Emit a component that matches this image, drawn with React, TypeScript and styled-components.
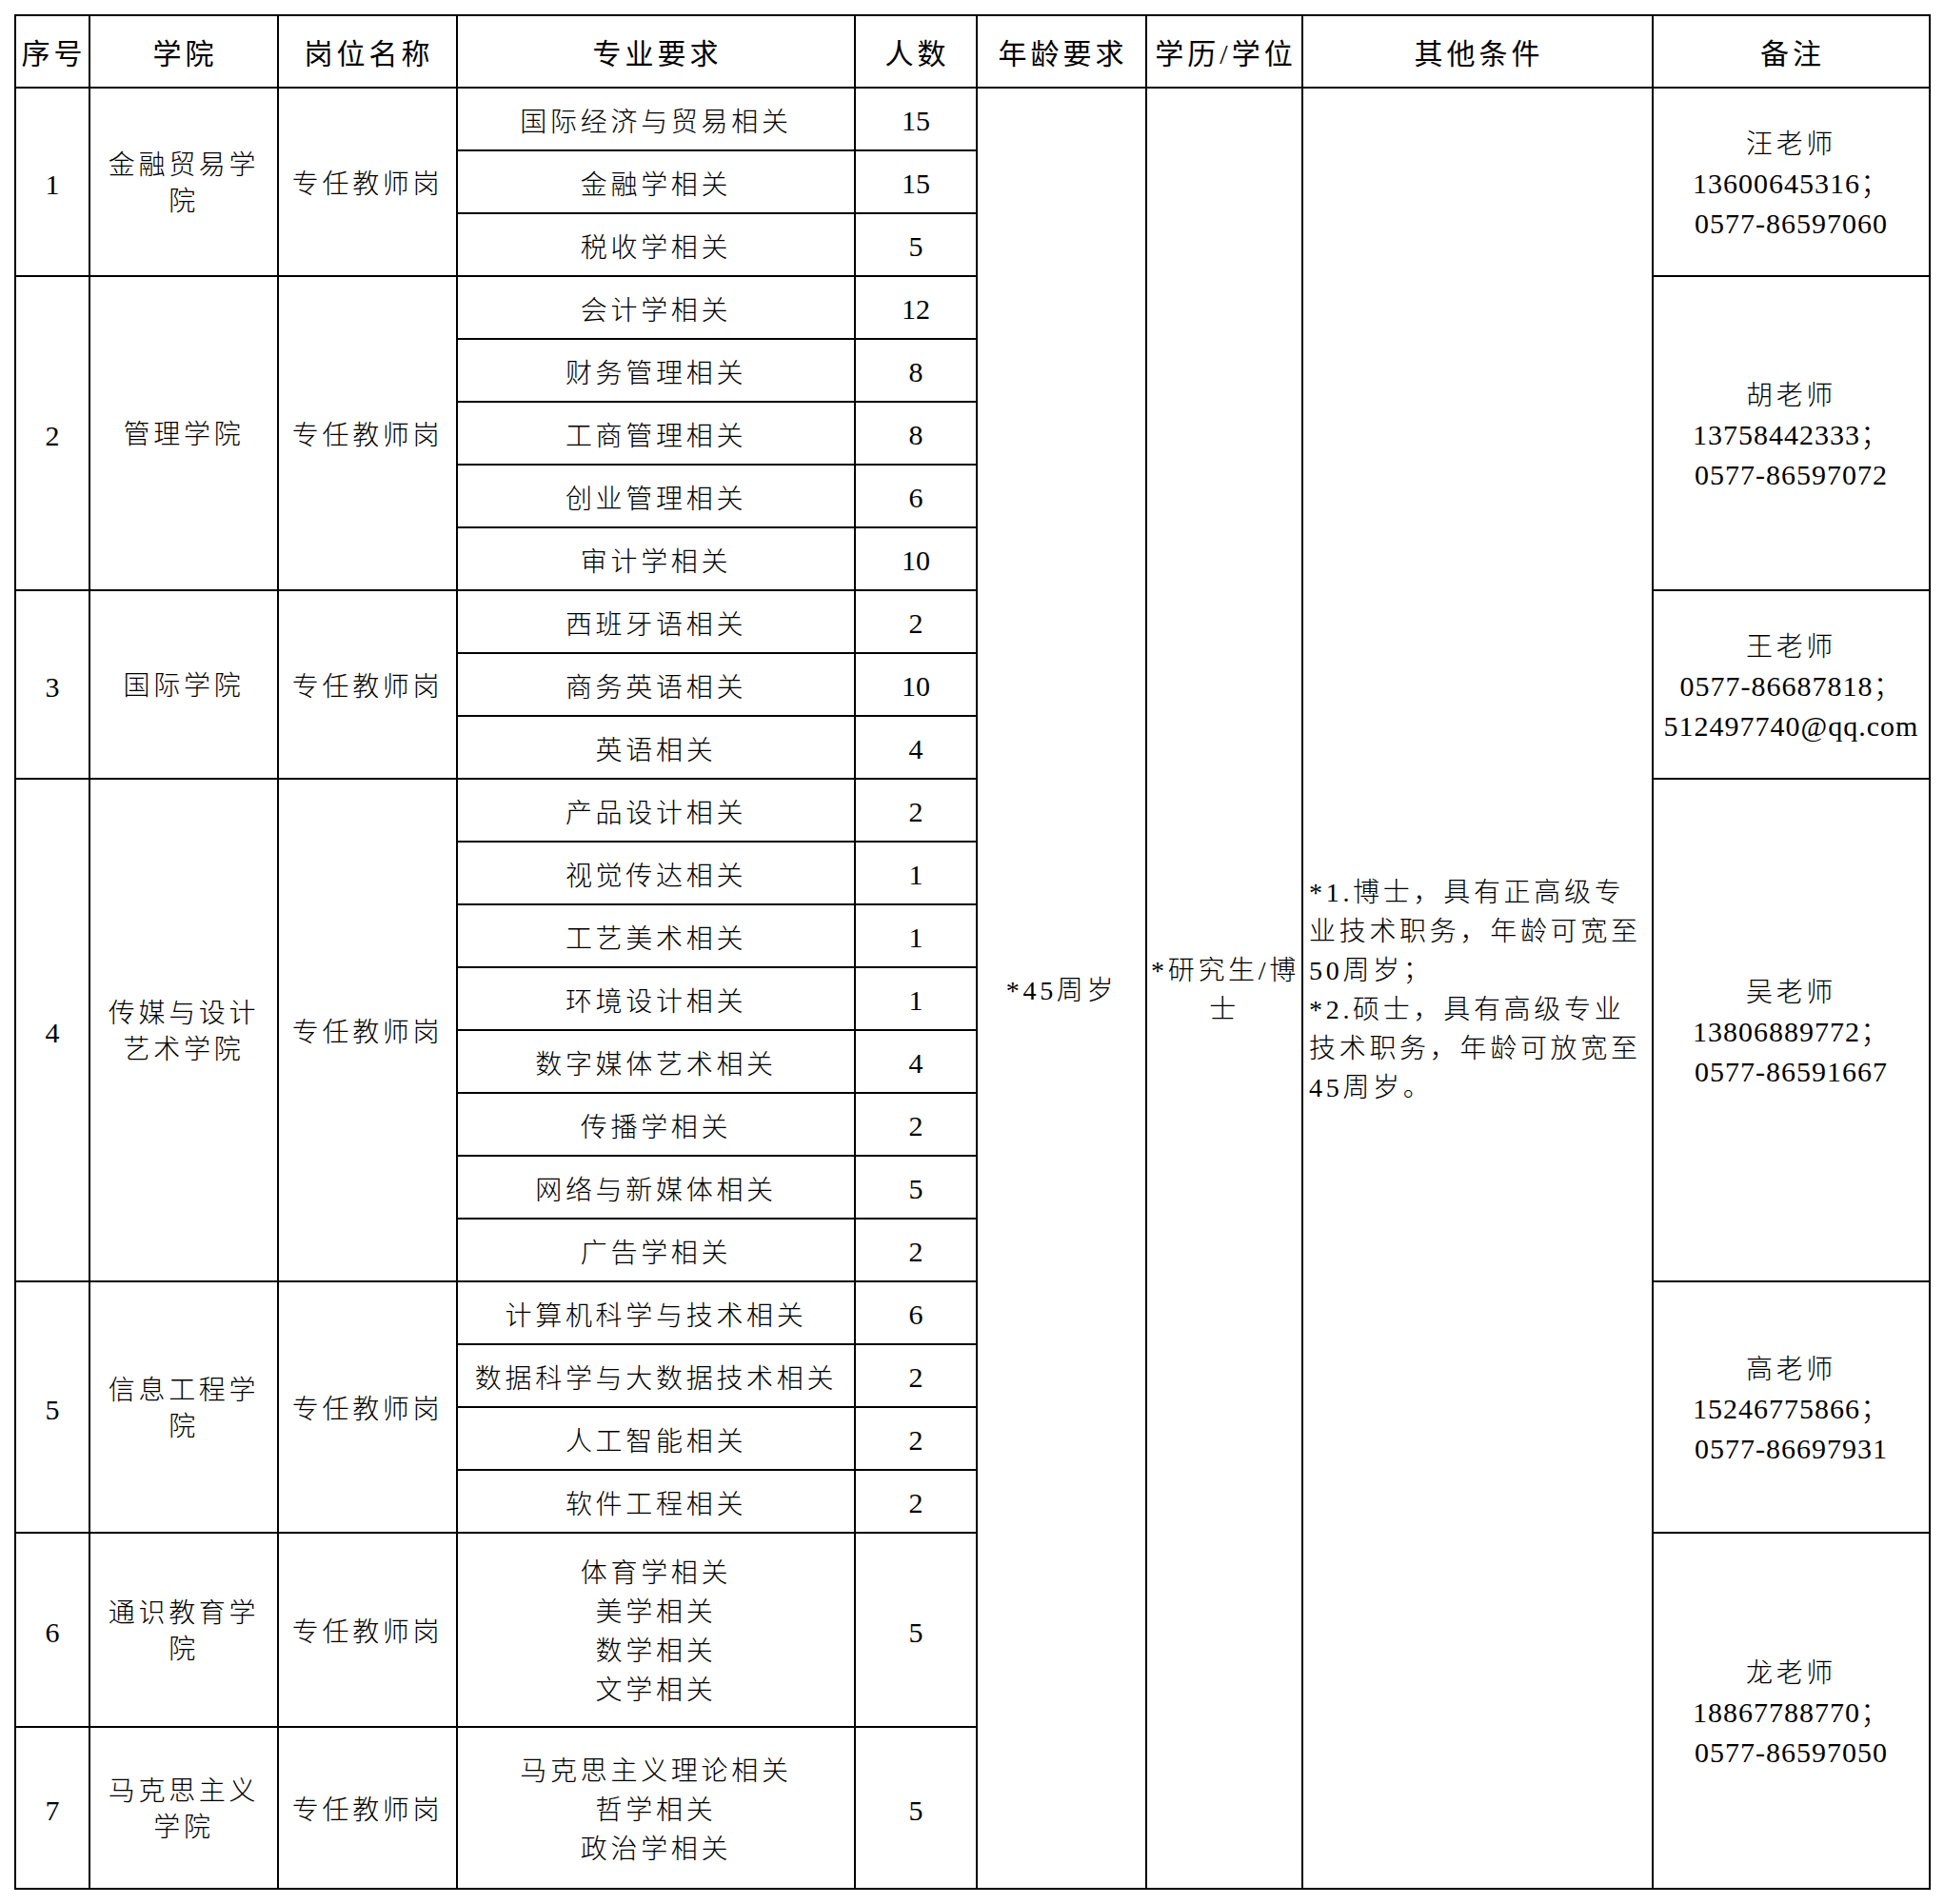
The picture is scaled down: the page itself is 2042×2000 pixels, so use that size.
import { Fragment } from 'react';
import styled, { createGlobalStyle } from 'styled-components';

const GlobalStyle = createGlobalStyle`
  html, body {
    margin: 0;
    padding: 0;
    background: #fff;
  }
`;

const Page = styled.div`
  padding: 15px 0 0 15px;
`;

const Sheet = styled.table`
  border-collapse: collapse;
  table-layout: fixed;
  width: 2011px;
  font-family: 'Liberation Serif', 'Noto Sans CJK SC', serif;
  font-size: 28px;
  font-weight: 300;
  color: #000;
`;

const HeadRow = styled.tr`
  height: 76px;
`;

const HeadCell = styled.th`
  border: 2px solid #000;
  padding: 0 0 0 3px;
  font-size: 30px;
  font-weight: 400;
  letter-spacing: 4px;
  text-align: center;
  vertical-align: middle;
  white-space: nowrap;
`;

const Row = styled.tr<{ $h: number }>`
  height: ${(p) => p.$h}px;
`;

const Cell = styled.td<{ $align?: 'left' | 'center'; $top?: number; $numeric?: boolean }>`
  border: 2px solid #000;
  padding: ${(p) => p.$top ?? 4}px 4px 0 ${(p) => (p.$align === 'left' ? 6 : 4)}px;
  text-align: ${(p) => p.$align ?? 'center'};
  vertical-align: middle;
  font-size: ${(p) => (p.$numeric ? 30 : 28)}px;
  line-height: 41px;
  letter-spacing: ${(p) => (p.$numeric ? 0 : 3.7)}px;
  white-space: nowrap;
`;

const CollegeText = styled.div`
  line-height: 38px;
`;

const Contact = styled.span`
  font-size: 30px;
  letter-spacing: 1px;
`;

type Major = { lines: string[]; count: number };

type Group = {
  no: number;
  college: string[];
  majors: Major[];
  rowHeight: number;
  contact?: { name: string; phone: string; extra: string; span: number };
};

const groups: Group[] = [
  {
    no: 1,
    college: ['金融贸易学', '院'],
    rowHeight: 66,
    majors: [
      { lines: ['国际经济与贸易相关'], count: 15 },
      { lines: ['金融学相关'], count: 15 },
      { lines: ['税收学相关'], count: 5 },
    ],
    contact: { name: '汪老师', phone: '13600645316；', extra: '0577-86597060', span: 3 },
  },
  {
    no: 2,
    college: ['管理学院'],
    rowHeight: 66,
    majors: [
      { lines: ['会计学相关'], count: 12 },
      { lines: ['财务管理相关'], count: 8 },
      { lines: ['工商管理相关'], count: 8 },
      { lines: ['创业管理相关'], count: 6 },
      { lines: ['审计学相关'], count: 10 },
    ],
    contact: { name: '胡老师', phone: '13758442333；', extra: '0577-86597072', span: 5 },
  },
  {
    no: 3,
    college: ['国际学院'],
    rowHeight: 66,
    majors: [
      { lines: ['西班牙语相关'], count: 2 },
      { lines: ['商务英语相关'], count: 10 },
      { lines: ['英语相关'], count: 4 },
    ],
    contact: { name: '王老师', phone: '0577-86687818；', extra: '512497740@qq.com', span: 3 },
  },
  {
    no: 4,
    college: ['传媒与设计', '艺术学院'],
    rowHeight: 66,
    majors: [
      { lines: ['产品设计相关'], count: 2 },
      { lines: ['视觉传达相关'], count: 1 },
      { lines: ['工艺美术相关'], count: 1 },
      { lines: ['环境设计相关'], count: 1 },
      { lines: ['数字媒体艺术相关'], count: 4 },
      { lines: ['传播学相关'], count: 2 },
      { lines: ['网络与新媒体相关'], count: 5 },
      { lines: ['广告学相关'], count: 2 },
    ],
    contact: { name: '吴老师', phone: '13806889772；', extra: '0577-86591667', span: 8 },
  },
  {
    no: 5,
    college: ['信息工程学', '院'],
    rowHeight: 66,
    majors: [
      { lines: ['计算机科学与技术相关'], count: 6 },
      { lines: ['数据科学与大数据技术相关'], count: 2 },
      { lines: ['人工智能相关'], count: 2 },
      { lines: ['软件工程相关'], count: 2 },
    ],
    contact: { name: '高老师', phone: '15246775866；', extra: '0577-86697931', span: 4 },
  },
  {
    no: 6,
    college: ['通识教育学', '院'],
    rowHeight: 204,
    majors: [{ lines: ['体育学相关', '美学相关', '数学相关', '文学相关'], count: 5 }],
    contact: { name: '龙老师', phone: '18867788770；', extra: '0577-86597050', span: 2 },
  },
  {
    no: 7,
    college: ['马克思主义', '学院'],
    rowHeight: 170,
    majors: [{ lines: ['马克思主义理论相关', '哲学相关', '政治学相关'], count: 5 }],
  },
];

const headers = ['序号', '学院', '岗位名称', '专业要求', '人数', '年龄要求', '学历/学位', '其他条件', '备注'];
const widths = [78, 198, 188, 418, 128, 178, 164, 368, 291];

const otherConditions = [
  '*1.博士，具有正高级专',
  '业技术职务，年龄可宽至',
  '50周岁；',
  '*2.硕士，具有高级专业',
  '技术职务，年龄可放宽至',
  '45周岁。',
];

const totalRows = groups.reduce((n, g) => n + g.majors.length, 0);

const Lines = ({ items }: { items: string[] }) => (
  <>
    {items.map((line, i) => (
      <Fragment key={i}>
        {i > 0 && <br />}
        {line}
      </Fragment>
    ))}
  </>
);

export default function App() {
  return (
    <>
      <GlobalStyle />
      <Page>
        <Sheet>
          <colgroup>
            {widths.map((w, i) => (
              <col key={i} style={{ width: w }} />
            ))}
          </colgroup>
          <thead>
            <HeadRow>
              {headers.map((h) => (
                <HeadCell key={h}>{h}</HeadCell>
              ))}
            </HeadRow>
          </thead>
          <tbody>
            {groups.map((g, gi) =>
              g.majors.map((m, mi) => (
                <Row key={`${g.no}-${mi}`} $h={g.rowHeight}>
                  {mi === 0 && (
                    <>
                      <Cell rowSpan={g.majors.length} $numeric>
                        {g.no}
                      </Cell>
                      <Cell rowSpan={g.majors.length}>
                        <CollegeText>
                          <Lines items={g.college} />
                        </CollegeText>
                      </Cell>
                      <Cell rowSpan={g.majors.length}>专任教师岗</Cell>
                    </>
                  )}
                  <Cell $top={g.rowHeight === 66 ? 7 : 4}>
                    <Lines items={m.lines} />
                  </Cell>
                  <Cell $top={g.rowHeight === 66 ? 3 : 4} $numeric>
                    {m.count}
                  </Cell>
                  {gi === 0 && mi === 0 && (
                    <>
                      <Cell rowSpan={totalRows}>*45周岁</Cell>
                      <Cell rowSpan={totalRows}>
                        <Lines items={['*研究生/博', '士']} />
                      </Cell>
                      <Cell rowSpan={totalRows} $align="left">
                        <Lines items={otherConditions} />
                      </Cell>
                    </>
                  )}
                  {mi === 0 && g.contact && (
                    <Cell rowSpan={g.contact.span}>
                      {g.contact.name}
                      <br />
                      <Contact>{g.contact.phone}</Contact>
                      <br />
                      <Contact>{g.contact.extra}</Contact>
                    </Cell>
                  )}
                </Row>
              ))
            )}
          </tbody>
        </Sheet>
      </Page>
    </>
  );
}
